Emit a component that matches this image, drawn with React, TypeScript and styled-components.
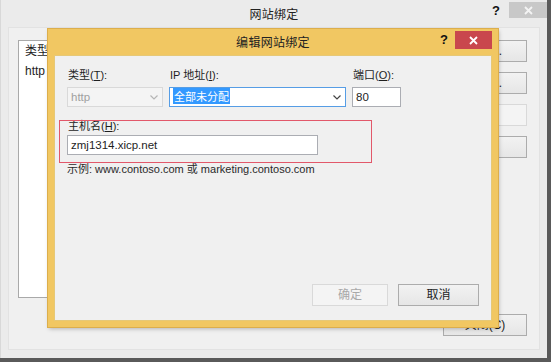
import React from "react";
import styled, { createGlobalStyle } from "styled-components";

const UI_FONT = `"Liberation Sans", "Noto Sans CJK SC", sans-serif`;

const Global = createGlobalStyle`
  html, body { margin: 0; padding: 0; }
  body {
    width: 551px; height: 362px; overflow: hidden;
    font-family: ${UI_FONT};
    font-size: 11px; color: #1e1e1e;
  }
  * { box-sizing: border-box; }
`;

const Desktop = styled.div`
  position: relative;
  width: 551px;
  height: 362px;
  overflow: hidden;
  background: #5a5a5a;
`;

const BackWindow = styled.div`
  position: absolute;
  left: 0;
  top: 0;
  width: 547px;
  height: 358px;
  background: #ebebeb;
  border-left: 1px solid #d8d8d8;
  display: flex;
  flex-direction: column;
`;

const TitleBar = styled.div<{ $h: number }>`
  height: ${(p) => p.$h}px;
  flex: none;
  display: grid;
  grid-template-columns: 1fr auto 1fr;
  align-items: start;
`;

const TitleText = styled.div<{ $h: number }>`
  grid-column: 2;
  line-height: ${(p) => p.$h}px;
  font-family: "Noto Sans CJK SC", sans-serif;
  font-size: 12px;
  letter-spacing: 0.3px;
  color: #222;
`;

const TitleControls = styled.div`
  grid-column: 3;
  justify-self: end;
  display: flex;
  align-items: flex-start;
`;

const HelpMark = styled.span<{ $top: number; $gap: number }>`
  margin-top: ${(p) => p.$top}px;
  margin-right: ${(p) => p.$gap}px;
  font-family: "Liberation Sans", sans-serif;
  font-weight: bold;
  font-size: 13px;
  color: #111;
  line-height: 16px;
`;

const CloseButton = styled.div<{ $bg: string; $w: number; $h: number; $top: number }>`
  width: ${(p) => p.$w}px;
  height: ${(p) => p.$h}px;
  margin-top: ${(p) => p.$top}px;
  background: ${(p) => p.$bg};
  display: flex;
  align-items: center;
  justify-content: center;
`;

const BackClient = styled.div`
  flex: 1;
  margin: 0 7px 8px 7px;
  background: #f0f0f0;
  border: 1px solid #e2e2e2;
  padding: 12px 12px 13px 9px;
  display: flex;
  flex-direction: column;
`;

const BackMain = styled.div`
  display: flex;
  align-items: flex-start;
  gap: 12px;
`;

const ListBox = styled.div`
  flex: 1;
  height: 258px;
  background: #fff;
  border: 1px solid #a9a9a9;
`;

const ListRow = styled.div<{ $h: number }>`
  height: ${(p) => p.$h}px;
  line-height: ${(p) => p.$h}px;
  padding-left: 6px;
  font-family: ${UI_FONT};
  font-size: 12px;
  color: #1e1e1e;
`;

const ButtonColumn = styled.div`
  width: 100px;
  display: flex;
  flex-direction: column;
  gap: 10px;
`;

const Button = styled.div<{ $w?: number; $disabled?: boolean }>`
  width: ${(p) => (p.$w ? `${p.$w}px` : "100%")};
  height: 22px;
  flex: none;
  border: 1px solid ${(p) => (p.$disabled ? "#d9d9d9" : "#acacac")};
  background: ${(p) => (p.$disabled ? "#f4f4f4" : "linear-gradient(#f2f2f2, #e6e6e6)")};
  color: ${(p) => (p.$disabled ? "#a8a8a8" : "#1e1e1e")};
  display: flex;
  align-items: center;
  justify-content: center;
  font-family: ${UI_FONT};
  font-size: 12px;
  line-height: 16px;
  white-space: nowrap;
`;

const BackFooter = styled.div`
  margin-top: auto;
  display: flex;
  justify-content: flex-end;
`;

const FrontWindow = styled.div`
  position: absolute;
  left: 48px;
  top: 29px;
  width: 450px;
  height: 298px;
  background: #f1c762;
  box-shadow: 0 0 0 1px #dcae4c, 1px 2px 4px rgba(0, 0, 0, 0.25);
  padding: 0 6px 6px 6px;
  display: flex;
  flex-direction: column;
`;

const FrontClient = styled.div`
  flex: 1;
  background: #f0f0f0;
  border: 1px solid #e6c877;
  padding: 11px 12px 14px 12px;
  display: flex;
  flex-direction: column;
`;

const FieldsGrid = styled.div`
  display: grid;
  grid-template-columns: 96px 177px 49px;
  grid-template-rows: 16px 20px;
  column-gap: 6px;
  row-gap: 4px;
`;

const Label = styled.div`
  line-height: 16px;
  font-family: ${UI_FONT};
  font-size: 11px;
  color: #1e1e1e;
  white-space: nowrap;
  padding-left: 1px;
  u { text-decoration: underline; text-underline-offset: 1px; }
`;

const Field = styled.div<{ $focus?: boolean; $disabled?: boolean; $w?: number }>`
  width: ${(p) => (p.$w ? `${p.$w}px` : "auto")};
  height: 20px;
  background: ${(p) => (p.$disabled ? "#f4f4f4" : "#fff")};
  border: 1px solid ${(p) => (p.$focus ? "#569de5" : p.$disabled ? "#d9d9d9" : "#abadb3")};
  display: flex;
  align-items: center;
  padding: 0 3px;
  font-family: ${UI_FONT};
  font-size: 11.5px;
  color: ${(p) => (p.$disabled ? "#a0a0a0" : "#1e1e1e")};
  white-space: nowrap;
`;

const FieldValue = styled.span`
  flex: 1;
  line-height: 16px;
`;

const Highlight = styled.span`
  background: #3399ff;
  color: #fff;
  font-family: "Noto Sans CJK SC", sans-serif;
  font-size: 11px;
  line-height: 14px;
  padding: 0 1px;
`;

const Chevron = styled.svg<{ $muted?: boolean }>`
  width: 8px;
  height: 5px;
  margin-right: 1px;
  stroke: ${(p) => (p.$muted ? "#b5b5b5" : "#444")};
  fill: none;
  stroke-width: 1.2;
`;

const HostSection = styled.div`
  position: relative;
  margin-top: 11px;
  display: flex;
  flex-direction: column;
  gap: 1px;
`;

const Annotation = styled.div`
  position: absolute;
  left: -8px;
  top: 2px;
  width: 313px;
  height: 43px;
  border: 1px solid #e2586a;
  pointer-events: none;
`;

const Example = styled.div`
  margin-top: 6px;
  line-height: 16px;
  font-family: ${UI_FONT};
  font-size: 11px;
  color: #2a2a2a;
`;

const Footer = styled.div`
  margin-top: auto;
  display: flex;
  justify-content: flex-end;
  gap: 10px;
`;

const CloseX = ({ color }: { color: string }) => (
  <svg width="9" height="9" viewBox="0 0 9 9">
    <path d="M1 1 L8 8 M8 1 L1 8" stroke={color} strokeWidth="1.8" />
  </svg>
);

const Down = ({ muted }: { muted?: boolean }) => (
  <Chevron $muted={muted} viewBox="0 0 8 5">
    <polyline points="0.5,0.5 4,4 7.5,0.5" />
  </Chevron>
);

export default function App() {
  return (
    <>
      <Global />
      <Desktop>
        <BackWindow>
          <TitleBar $h={27}>
            <TitleText $h={27}>网站绑定</TitleText>
            <TitleControls>
              <HelpMark $top={3} $gap={9}>?</HelpMark>
              <CloseButton $bg="#c8c8c8" $w={38} $h={16} $top={2}>
                <CloseX color="#f4f4f4" />
              </CloseButton>
            </TitleControls>
          </TitleBar>
          <BackClient>
            <BackMain>
              <ListBox>
                <ListRow $h={20}>类型</ListRow>
                <ListRow $h={20}>http</ListRow>
              </ListBox>
              <ButtonColumn>
                <Button>添加(A)...</Button>
                <Button>编辑(E)...</Button>
                <Button $disabled>删除(R)</Button>
                <Button>浏览(B)</Button>
              </ButtonColumn>
            </BackMain>
            <BackFooter>
              <Button $w={84}>关闭(C)</Button>
            </BackFooter>
          </BackClient>
        </BackWindow>

        <FrontWindow>
          <TitleBar $h={26}>
            <TitleText $h={26}>编辑网站绑定</TitleText>
            <TitleControls>
              <HelpMark $top={3} $gap={7}>?</HelpMark>
              <CloseButton $bg="#c9474d" $w={37} $h={18} $top={2}>
                <CloseX color="#ffffff" />
              </CloseButton>
            </TitleControls>
          </TitleBar>
          <FrontClient>
            <FieldsGrid>
              <Label>
                类型(<u>T</u>):
              </Label>
              <Label>
                IP 地址(<u>I</u>):
              </Label>
              <Label>
                端口(<u>O</u>):
              </Label>
              <Field $disabled>
                <FieldValue>http</FieldValue>
                <Down muted />
              </Field>
              <Field $focus>
                <FieldValue>
                  <Highlight>全部未分配</Highlight>
                </FieldValue>
                <Down />
              </Field>
              <Field>
                <FieldValue>80</FieldValue>
              </Field>
            </FieldsGrid>

            <HostSection>
              <Label>
                主机名(<u>H</u>):
              </Label>
              <Field $w={251}>
                <FieldValue>zmj1314.xicp.net</FieldValue>
              </Field>
              <Annotation />
            </HostSection>

            <Example>示例: www.contoso.com 或 marketing.contoso.com</Example>

            <Footer>
              <Button $w={76} $disabled>
                确定
              </Button>
              <Button $w={81}>取消</Button>
            </Footer>
          </FrontClient>
        </FrontWindow>
      </Desktop>
    </>
  );
}
